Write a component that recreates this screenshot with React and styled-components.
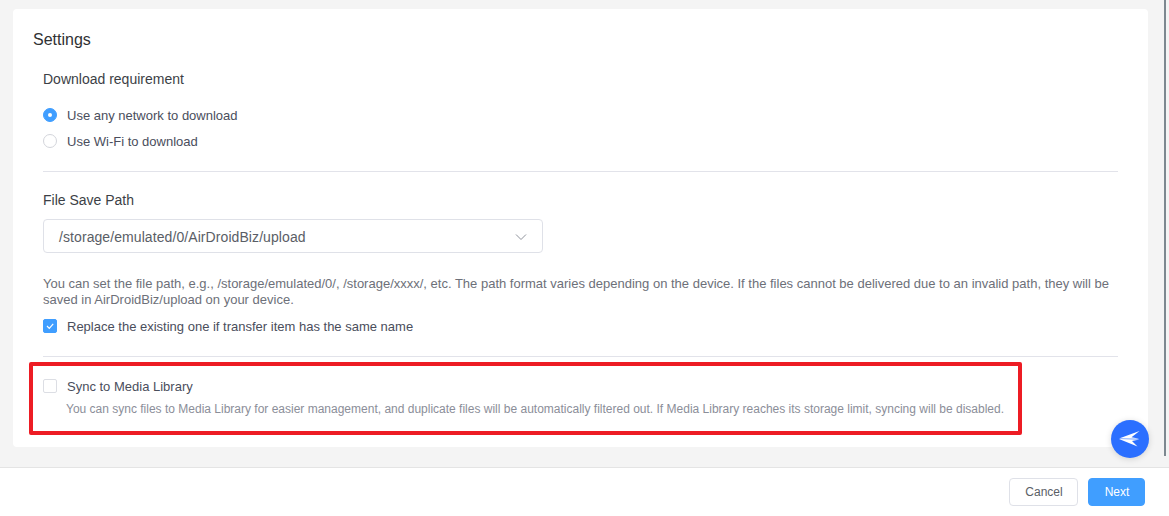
import React from 'react';
import styled, { createGlobalStyle } from 'styled-components';

const GlobalStyle = createGlobalStyle`
  html, body { margin: 0; padding: 0; height: 100%; overflow: hidden; }
  body { font-family: "Liberation Sans", Arial, sans-serif; background: #f4f4f4; }
`;

const Page = styled.div`
  position: relative;
  width: 1169px;
  height: 516px;
  display: flex;
  flex-direction: column;
  background: #f4f4f4;
`;

const Content = styled.div`
  flex: 1;
  padding: 9px 21px 0 13px;
`;

const Card = styled.section`
  height: 438px;
  box-sizing: border-box;
  padding: 22px 30px 0 20px;
  background: #fff;
  border-radius: 4px;
`;

const Title = styled.h1`
  margin: 0;
  font-size: 16px;
  line-height: 18px;
  font-weight: 400;
  color: #303133;
`;

const Body = styled.div`
  margin-left: 10px;
`;

const Label = styled.div`
  font-size: 14px;
  line-height: 16px;
  color: #3c3f46;
  margin-top: ${p => p.$top}px;
`;

const OptionRow = styled.label`
  display: flex;
  align-items: center;
  height: 16px;
  gap: 10px;
  margin-top: ${p => p.$top}px;
  font-size: 13px;
  color: #4a4e5c;
`;

const Radio = styled.span`
  width: 14px;
  height: 14px;
  box-sizing: border-box;
  border-radius: 50%;
  display: flex;
  align-items: center;
  justify-content: center;
  border: 1px solid ${p => (p.$on ? '#409eff' : '#d3d5db')};
  background: ${p => (p.$on ? '#409eff' : '#fff')};
  &::after {
    content: '';
    width: 4px;
    height: 4px;
    border-radius: 50%;
    background: ${p => (p.$on ? '#fff' : 'transparent')};
  }
`;

const Check = styled.span`
  width: 14px;
  height: 14px;
  box-sizing: border-box;
  border-radius: 2px;
  display: flex;
  align-items: center;
  justify-content: center;
  border: 1px solid ${p => (p.$on ? '#409eff' : '#dcdee4')};
  background: ${p => (p.$on ? '#409eff' : '#fff')};
`;

const Divider = styled.hr`
  border: 0;
  height: 1px;
  background: #e2e3ea;
  margin: ${p => p.$top}px 0 0;
`;

const Select = styled.div`
  width: 500px;
  height: 34px;
  box-sizing: border-box;
  margin-top: 11px;
  padding: 1px 15px 0;
  display: flex;
  align-items: center;
  justify-content: space-between;
  border: 1px solid #dfe1e8;
  border-radius: 4px;
  font-size: 14px;
  letter-spacing: 0.08px;
  color: #5a5e66;
`;

const Hint = styled.p`
  margin: 23px 0 0;
  font-size: 13px;
  line-height: 16px;
  color: #6d7079;
`;

const SyncBox = styled.div`
  margin: 5px 0 0 -14px;
  width: 993px;
  height: 73px;
  box-sizing: border-box;
  border: 4px solid #ed1c24;
  border-radius: 2px;
  padding: 12px 0 0 10px;
`;

const SyncHint = styled.div`
  margin: 8px 0 0 23px;
  font-size: 12px;
  line-height: 14px;
  color: #8b8e99;
`;

const Footer = styled.footer`
  height: 49px;
  box-sizing: border-box;
  background: #fff;
  border-top: 1px solid #e4e4e4;
  display: flex;
  justify-content: flex-end;
  align-items: center;
  gap: 10px;
  padding: 0 24px 0 0;
`;

const Button = styled.button`
  height: 28px;
  box-sizing: border-box;
  padding: 0 0 0 1px;
  width: ${p => (p.$primary ? 57 : 69)}px;
  border-radius: 4px;
  font-family: inherit;
  font-size: 12px;
  border: 1px solid ${p => (p.$primary ? '#409eff' : '#dfe1e8')};
  background: ${p => (p.$primary ? '#409eff' : '#fff')};
  color: ${p => (p.$primary ? '#fff' : '#5a5e66')};
`;

const Fab = styled.div`
  position: absolute;
  left: 1111px;
  top: 420px;
  width: 38px;
  height: 38px;
  border-radius: 50%;
  background: #2b6fff;
  box-shadow: 0 1px 6px rgba(0, 0, 0, 0.15);
  display: flex;
  align-items: center;
  justify-content: center;
`;

const ScrollThumb = styled.div`
  position: absolute;
  left: 1164px;
  top: 0;
  width: 2px;
  height: 456px;
  background: #7d8890;
`;

const Chevron = () => (
  <svg width="12" height="12" viewBox="0 0 12 12" fill="none" stroke="#8e929b" strokeWidth="1">
    <path d="M1 3.5 L6 8.5 L11 3.5" />
  </svg>
);

const Tick = () => (
  <svg width="10" height="10" viewBox="0 0 10 10" fill="none" stroke="#fff" strokeWidth="1.2">
    <path d="M2 5 L4.3 7.3 L8.2 2.8" />
  </svg>
);

const Plane = () => (
  <svg width="21" height="16" viewBox="0 0 21 16" style={{ marginLeft: -2 }}>
    <path d="M0 7.6 L20.5 0 L12.5 6.2 L20.5 7.8 Z" fill="#fff" />
    <path d="M0 8.1 L20.5 8.6 L13 10 L18.5 15.6 Z" fill="#fff" />
  </svg>
);

export default function App() {
  return (
    <Page>
      <GlobalStyle />
      <Content>
        <Card>
          <Title>Settings</Title>
          <Body>
            <Label $top={22}>Download requirement</Label>
            <OptionRow $top={20}><Radio $on />Use any network to download</OptionRow>
            <OptionRow $top={10}><Radio />Use Wi-Fi to download</OptionRow>
            <Divider $top={22} />
            <Label $top={20}>File Save Path</Label>
            <Select>/storage/emulated/0/AirDroidBiz/upload<Chevron /></Select>
            <Hint>
              You can set the file path, e.g., /storage/emulated/0/, /storage/xxxx/, etc. The path format varies depending on the device. If the files cannot be delivered due to an invalid path, they will be saved in AirDroidBiz/upload on your device.
            </Hint>
            <OptionRow $top={10}><Check $on><Tick /></Check>Replace the existing one if transfer item has the same name</OptionRow>
            <Divider $top={22} />
            <SyncBox>
              <OptionRow $top={0}><Check />Sync to Media Library</OptionRow>
              <SyncHint>You can sync files to Media Library for easier management, and duplicate files will be automatically filtered out. If Media Library reaches its storage limit, syncing will be disabled.</SyncHint>
            </SyncBox>
          </Body>
        </Card>
      </Content>
      <Footer>
        <Button>Cancel</Button>
        <Button $primary>Next</Button>
      </Footer>
      <Fab><Plane /></Fab>
      <ScrollThumb />
    </Page>
  );
}
